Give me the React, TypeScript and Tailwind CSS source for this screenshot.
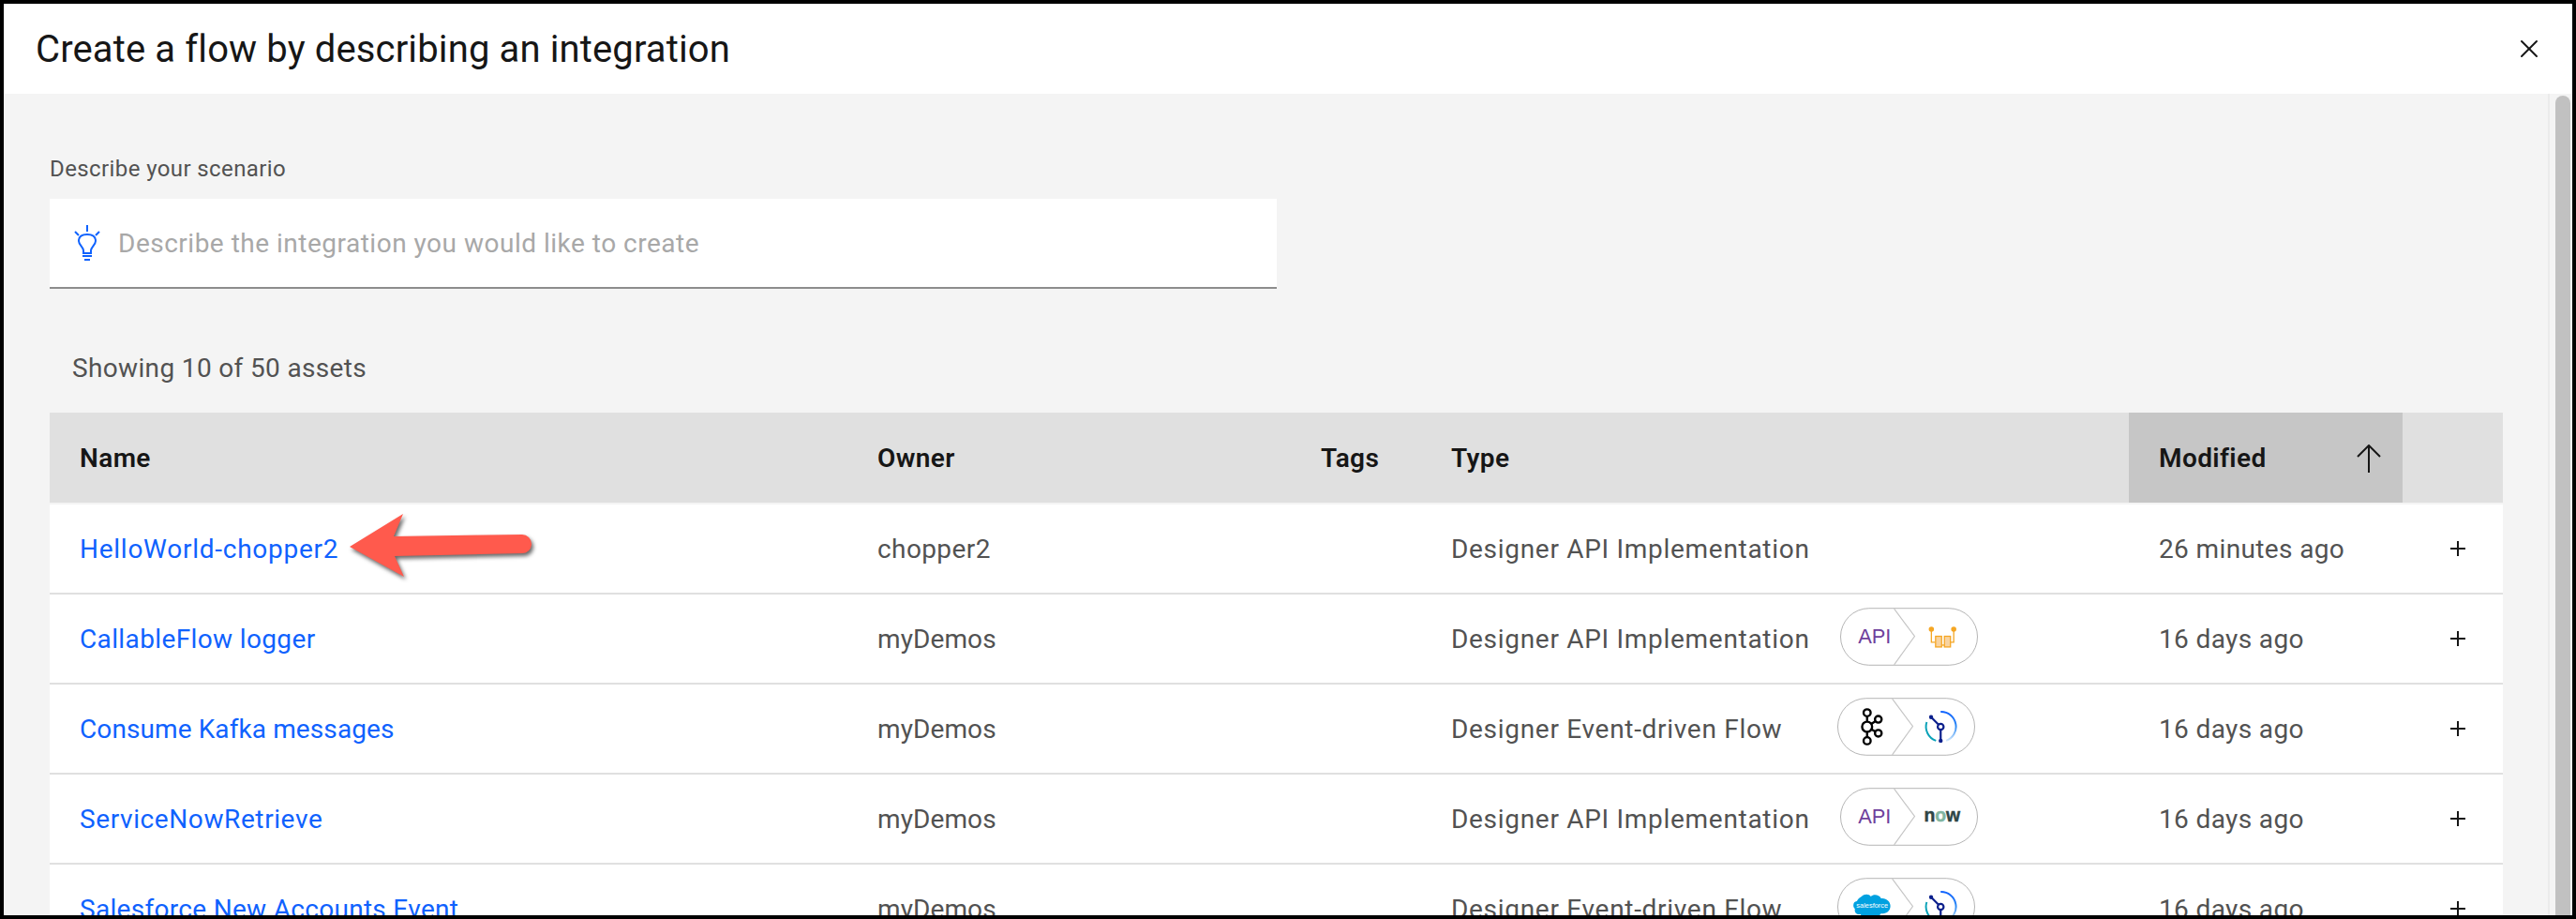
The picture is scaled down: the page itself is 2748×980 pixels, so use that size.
import { X } from "lucide-react";

const ApiLogo = () => (
  <text x="37" y="38" textAnchor="middle" fontSize="22" fill="#6e3f9c" fontFamily="Liberation Sans, sans-serif">API</text>
);

const LoggerIcon = () => (
  <g>
    <circle cx="98" cy="23" r="2.8" fill="#f5a623" />
    <circle cx="122" cy="23" r="2.8" fill="#f5a623" />
    <path d="M98 25V37H102M122 25V37H118" fill="none" stroke="#f5a623" strokeWidth="1.3" />
    <rect x="102.5" y="30.5" width="6.5" height="11.5" fill="#f8d3a0" stroke="#f5a623" strokeWidth="1.3" />
    <rect x="112" y="30.5" width="6.5" height="11.5" fill="#f8d3a0" stroke="#f5a623" strokeWidth="1.3" />
    <path d="M109 40H112" stroke="#f5a623" strokeWidth="1.3" />
  </g>
);

const KafkaIcon = () => (
  <g fill="none" stroke="#000" strokeWidth="2.4">
    <path d="M32 20V45M32 31L44 23M32 31L44 38" />
    <circle cx="32" cy="16" r="3.8" fill="#fff" />
    <circle cx="32" cy="31" r="5.4" fill="#fff" />
    <circle cx="32" cy="46" r="3.8" fill="#fff" />
    <circle cx="44" cy="23" r="3.6" fill="#fff" />
    <circle cx="44" cy="38" r="3.6" fill="#fff" />
  </g>
);

const FlowIcon = ({ id }: { id: string }) => (
  <g fill="none">
    <defs>
      <linearGradient id={id} x1="0" y1="0" x2="0" y2="1">
        <stop offset="0" stopColor="#0f62fe" />
        <stop offset="0.5" stopColor="#2f8cf5" />
        <stop offset="1" stopColor="#d0e6fb" />
      </linearGradient>
    </defs>
    <path d="M111 15A16 16 0 0 1 117 46" stroke={`url(#${id})`} strokeWidth="2" />
    <path d="M96 26A16 16 0 0 0 106 46" stroke="#0aa2b8" strokeWidth="2" />
    <path d="M101 21L109 29M111 34V46" stroke="#0b1f8c" strokeWidth="2.2" />
    <circle cx="111" cy="31" r="3.2" stroke="#0b1f8c" strokeWidth="2.2" />
    <circle cx="100.7" cy="20.7" r="2.2" fill="#0b1f8c" />
    <circle cx="111" cy="46" r="2.2" fill="#0b1f8c" />
  </g>
);

const NowLogo = () => (
  <text x="90" y="36" textLength="39" lengthAdjust="spacingAndGlyphs" fontSize="21" fontWeight="700" stroke="#2e4545" strokeWidth="0.5" fill="#2e4545" fontFamily="Liberation Sans, sans-serif">
    n<tspan fill="#81b5a1" stroke="#81b5a1">o</tspan>w
  </text>
);

const SalesforceLogo = () => (
  <g>
    <path d="M26 20C29 17 34 17 36 20C39 17 45 18 47 22C52 21 57 25 57 30C57 36 52 39 47 38C45 42 39 42 37 40C34 44 27 44 25 39C20 40 18 36 19 33C16 31 17 25 21 25C22 23 24 21 26 20Z" fill="#00a1e0" />
    <text x="37.5" y="32" textAnchor="middle" fontSize="7.5" fill="#fff" fontFamily="Liberation Sans, sans-serif">salesforce</text>
  </g>
);

const Pill = ({ kind, id }: { kind: "logger" | "now" | "kafka" | "salesforce"; id: string }) => {
  const tip = kind === "logger" || kind === "now" ? "M58 1L80 30.5L58 61" : "M59 1L81 30.5L59 61";
  return (
    <svg width="147" height="62" viewBox="0 0 148 62" className="shrink-0 mt-[14px] self-start">
      <rect x="0.5" y="0.5" width="147" height="61" rx="30.5" fill="#fff" stroke="#b4b4b4" />
      <path d={tip} fill="none" stroke="#c6c6c6" strokeWidth="1.2" />
      {kind === "logger" && <><ApiLogo /><LoggerIcon /></>}
      {kind === "now" && <><ApiLogo /><NowLogo /></>}
      {kind === "kafka" && <><KafkaIcon /><FlowIcon id={id} /></>}
      {kind === "salesforce" && <><SalesforceLogo /><FlowIcon id={id} /></>}
    </svg>
  );
};

const Arrow = () => (
  <svg width="205" height="80" viewBox="0 0 205 80" className="absolute left-[315px] top-[5px] drop-shadow-[2px_3px_2px_rgba(0,0,0,0.6)]">
    <path d="M5 40L62 5L52 29L189 27A10 10 0 0 1 199 37V38A10 10 0 0 1 189 47L53 50L63 72Z" fill="#ff5a4d" />
  </svg>
);

const PlusIcon = () => (
  <svg width="16" height="16" viewBox="0 0 16 16" className="text-[#161616]">
    <path d="M8 0V16M0 8H16" stroke="currentColor" strokeWidth="2" />
  </svg>
);

const rows = [
  { name: "HelloWorld-chopper2", nameTracking: "tracking-[0.74px]", owner: "chopper2", ownerTracking: "tracking-[0.4px]", type: "Designer API Implementation", typeWidth: "w-auto", modified: "26 minutes ago", pill: null, arrow: true },
  { name: "CallableFlow logger", nameTracking: "tracking-[0.37px]", owner: "myDemos", ownerTracking: "tracking-[0.1px]", type: "Designer API Implementation", typeWidth: "w-[415px]", modified: "16 days ago", pill: "logger", arrow: false },
  { name: "Consume Kafka messages", nameTracking: "tracking-[0.1px]", owner: "myDemos", ownerTracking: "tracking-[0.1px]", type: "Designer Event-driven Flow", typeWidth: "w-[412px]", modified: "16 days ago", pill: "kafka", arrow: false },
  { name: "ServiceNowRetrieve", nameTracking: "tracking-[0.6px]", owner: "myDemos", ownerTracking: "tracking-[0.1px]", type: "Designer API Implementation", typeWidth: "w-[415px]", modified: "16 days ago", pill: "now", arrow: false },
  { name: "Salesforce New Accounts Event", nameTracking: "tracking-[0.3px]", owner: "myDemos", ownerTracking: "tracking-[0.1px]", type: "Designer Event-driven Flow", typeWidth: "w-[412px]", modified: "16 days ago", pill: "salesforce", arrow: false },
] as const;

const gridCols = "grid grid-cols-[851px_473px_139px_755px_292px_107px]";

export default function App() {
  return (
    <div className="w-[2748px] h-[980px] bg-black p-[4px] overflow-hidden font-['Roboto',sans-serif]">
      <div className="w-full h-full flex flex-col bg-white overflow-hidden">
        <div className="h-[96px] shrink-0 flex items-center justify-between pl-[34px] pr-[30px]">
          <h1 className="pt-[2px] text-[40px] font-normal tracking-[0.13px] text-[#161616]">Create a flow by describing an integration</h1>
          <X className="w-[32px] h-[32px] text-[#161616]" strokeWidth={1.5} />
        </div>

        <div className="flex-1 flex min-h-0 bg-[#f4f4f4]">
          <div className="w-[2714px] shrink-0 pl-[49px] pt-[64px] overflow-hidden">
            <label className="block h-[32px] leading-[32px] text-[24px] tracking-[0.4px] text-[#525252]">Describe your scenario</label>
            <div className="mt-[16px] w-[1309px] h-[96px] bg-white border-b-2 border-[#8d8d8d] flex items-center pl-[26px]">
              <svg width="28" height="38" viewBox="0 0 28 38" fill="none" stroke="#0f62fe" strokeWidth="2" className="shrink-0">
                <path d="M14 0V7M1 7L5 11M27 7L23 11" />
                <path d="M10 30V27C10 24 5 21 5 17C5 12 9 10 14 10C19 10 23 12 23 17C23 21 18 24 18 27V30Z" />
                <path d="M9 33H19M11 37H17" />
              </svg>
              <span className="ml-[19px] pt-[2px] text-[28px] tracking-[0.5px] text-[#a8a8a8]">Describe the integration you would like to create</span>
            </div>

            <p className="mt-[65px] mb-[27px] h-[40px] leading-[40px] pl-[24px] text-[28px] tracking-[0.35px] text-[#525252]">Showing 10 of 50 assets</p>

            <div className="w-[2617px]">
              <div className={`${gridCols} h-[96px] bg-[#e0e0e0] mb-[2px] text-[28px] font-semibold tracking-[0.4px] text-[#161616]`}>
                <div className="flex items-center pl-[32px] pt-[2px]">Name</div>
                <div className="flex items-center pl-[32px] pt-[2px]">Owner</div>
                <div className="flex items-center pl-[32px] pt-[2px]">Tags</div>
                <div className="flex items-center pl-[32px] pt-[2px]">Type</div>
                <div className="flex items-center justify-between pl-[32px] pr-[23px] pt-[2px] bg-[#c6c6c6]">
                  Modified
                  <svg width="26" height="30" viewBox="0 0 26 30" fill="none" stroke="#161616" strokeWidth="2">
                    <path d="M13 1V30M1 13L13 1L25 13" />
                  </svg>
                </div>
                <div />
              </div>

              {rows.map((row) => (
                <div key={row.name} className={`${gridCols} relative h-[96px] bg-white border-b-2 border-[#e0e0e0] text-[28px] text-[#525252]`}>
                  <div className={`flex items-center pl-[32px] pt-[1px] text-[#0f62fe] ${row.nameTracking}`}>{row.name}</div>
                  <div className={`flex items-center pl-[32px] pt-[1px] ${row.ownerTracking}`}>{row.owner}</div>
                  <div />
                  <div className="flex items-center pl-[32px]">
                    <span className={`${row.typeWidth} shrink-0 pt-[1px] tracking-[0.7px]`}>{row.type}</span>
                    {row.pill && <Pill kind={row.pill} id={`flow-${row.pill}`} />}
                  </div>
                  <div className="flex items-center pl-[32px] pt-[1px] tracking-[0.37px]">{row.modified}</div>
                  <div className="flex items-center justify-center pl-[11px]">
                    <PlusIcon />
                  </div>
                  {row.arrow && <Arrow />}
                </div>
              ))}
            </div>
          </div>

          <div className="w-[2px] shrink-0 bg-[#ebebeb]" />
          <div className="flex-1 bg-[#f4f4f4] pl-[6px] pr-[2px] pt-[2px]">
            <div className="w-[16px] h-full rounded-t-[8px] bg-[#c1c1c1]" />
          </div>
        </div>
      </div>
    </div>
  );
}
